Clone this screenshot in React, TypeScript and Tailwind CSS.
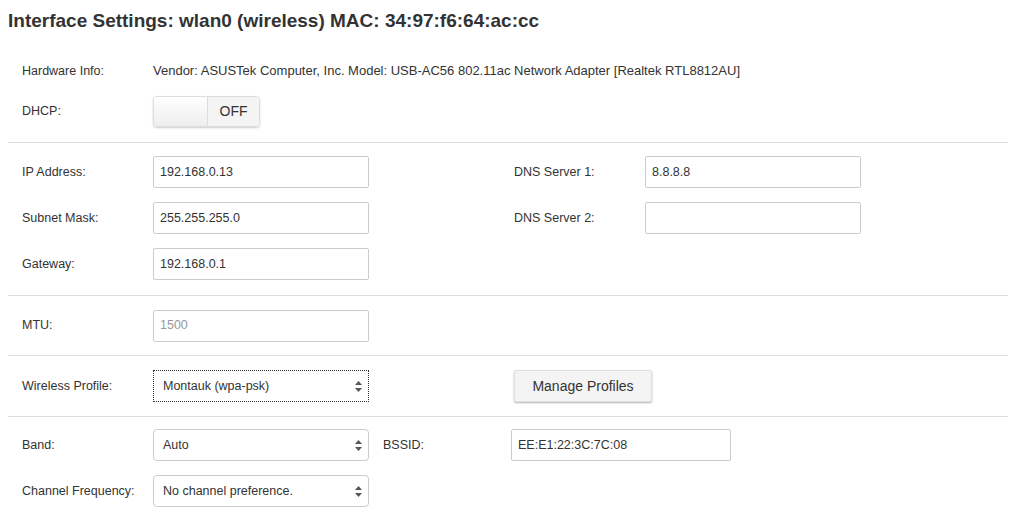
import React from "react";

const inp = "h-[32px] border border-[#ccc] bg-white px-[6px] text-[12.5px] text-[#333] flex items-center rounded-[2px]";
const Arrows = () => (
  <svg width="7" height="11" viewBox="0 0 7 11" className="ml-auto"><path d="M3.5 0L7 4H0z M3.5 11L0 7h7z" fill="#555"/></svg>
);
const Sel = ({ v, dotted }: { v: string; dotted?: boolean }) => (
  <div className={`w-[216px] h-[32px] ${dotted ? "border border-dotted border-[#333]" : "border border-[#ccc] rounded-[4px]"} bg-white pl-[9px] pr-[6px] text-[12.5px] text-[#333] flex items-center`}>
    {v}<Arrows />
  </div>
);
const Lbl = ({ t }: { t: string }) => <div className="w-[131px] text-[12.5px] text-[#333]">{t}</div>;
const Hr = () => <div className="border-t border-[#ddd] ml-[8px] mr-[16px]" />;

export default function App() {
  return (
    <div className="w-[1024px] h-[514px] bg-white overflow-hidden" style={{ fontFamily: "'Liberation Sans', Arial, sans-serif" }}>
      <div className="pl-[8px] pt-[7px] h-[52px] text-[19px] font-bold text-[#333]">Interface Settings: wlan0 (wireless) MAC: 34:97:f6:64:ac:cc</div>
      <div className="pl-[22px]">
        <div className="h-[38px] flex items-center"><Lbl t="Hardware Info:" /><span className="text-[13px] text-[#333]">Vendor: ASUSTek Computer, Inc. Model: USB-AC56 802.11ac Network Adapter [Realtek RTL8812AU]</span></div>
        <div className="h-[42px] flex items-center pt-[1px]">
          <Lbl t="DHCP:" />
          <div className="w-[107px] h-[31px] rounded-[4px] border border-[#ddd] shadow-[0_1px_2px_rgba(0,0,0,0.2)] flex overflow-hidden">
            <div className="w-[54px] bg-gradient-to-b from-white to-[#eee] border-r border-[#ddd]" />
            <div className="flex-1 bg-[#f4f4f4] flex items-center justify-center text-[14px] text-[#333]">OFF</div>
          </div>
        </div>
      </div>
      <div className="mt-[10px]"><Hr /></div>
      <div className="pl-[22px] pt-[6px]">
        <div className="h-[46px] flex items-center">
          <Lbl t="IP Address:" /><div className={`${inp} w-[216px]`}>192.168.0.13</div>
          <div className="w-[145px]" /><Lbl t="DNS Server 1:" /><div className={`${inp} w-[216px]`}>8.8.8.8</div>
        </div>
        <div className="h-[46px] flex items-center">
          <Lbl t="Subnet Mask:" /><div className={`${inp} w-[216px]`}>255.255.255.0</div>
          <div className="w-[145px]" /><Lbl t="DNS Server 2:" /><div className={`${inp} w-[216px]`}></div>
        </div>
        <div className="h-[46px] flex items-center">
          <Lbl t="Gateway:" /><div className={`${inp} w-[216px]`}>192.168.0.1</div>
        </div>
      </div>
      <div className="mt-[8px]"><Hr /></div>
      <div className="pl-[22px] h-[59px] flex items-center">
        <Lbl t="MTU:" /><div className={`${inp} w-[216px] bg-[#eee] text-[#999]`}>1500</div>
      </div>
      <Hr />
      <div className="pl-[22px] h-[60px] flex items-center">
        <Lbl t="Wireless Profile:" /><Sel v="Montauk (wpa-psk)" dotted />
        <div className="w-[145px]" />
        <div className="w-[138px] h-[32px] bg-[#f4f4f4] border border-[#e0e0e0] shadow-[0_1px_2px_rgba(0,0,0,0.3)] rounded-[2px] flex items-center justify-center text-[14px] text-[#333]">Manage Profiles</div>
      </div>
      <Hr />
      <div className="pl-[22px] pt-[12px]">
        <div className="h-[32px] flex items-center">
          <Lbl t="Band:" /><Sel v="Auto" />
          <div className="w-[14px]" /><div className="w-[128px] text-[12.5px] text-[#333]">BSSID:</div>
          <div className={`${inp} w-[220px]`}>EE:E1:22:3C:7C:08</div>
        </div>
        <div className="h-[32px] mt-[14px] flex items-center">
          <Lbl t="Channel Frequency:" /><Sel v="No channel preference." />
        </div>
      </div>
    </div>
  );
}
